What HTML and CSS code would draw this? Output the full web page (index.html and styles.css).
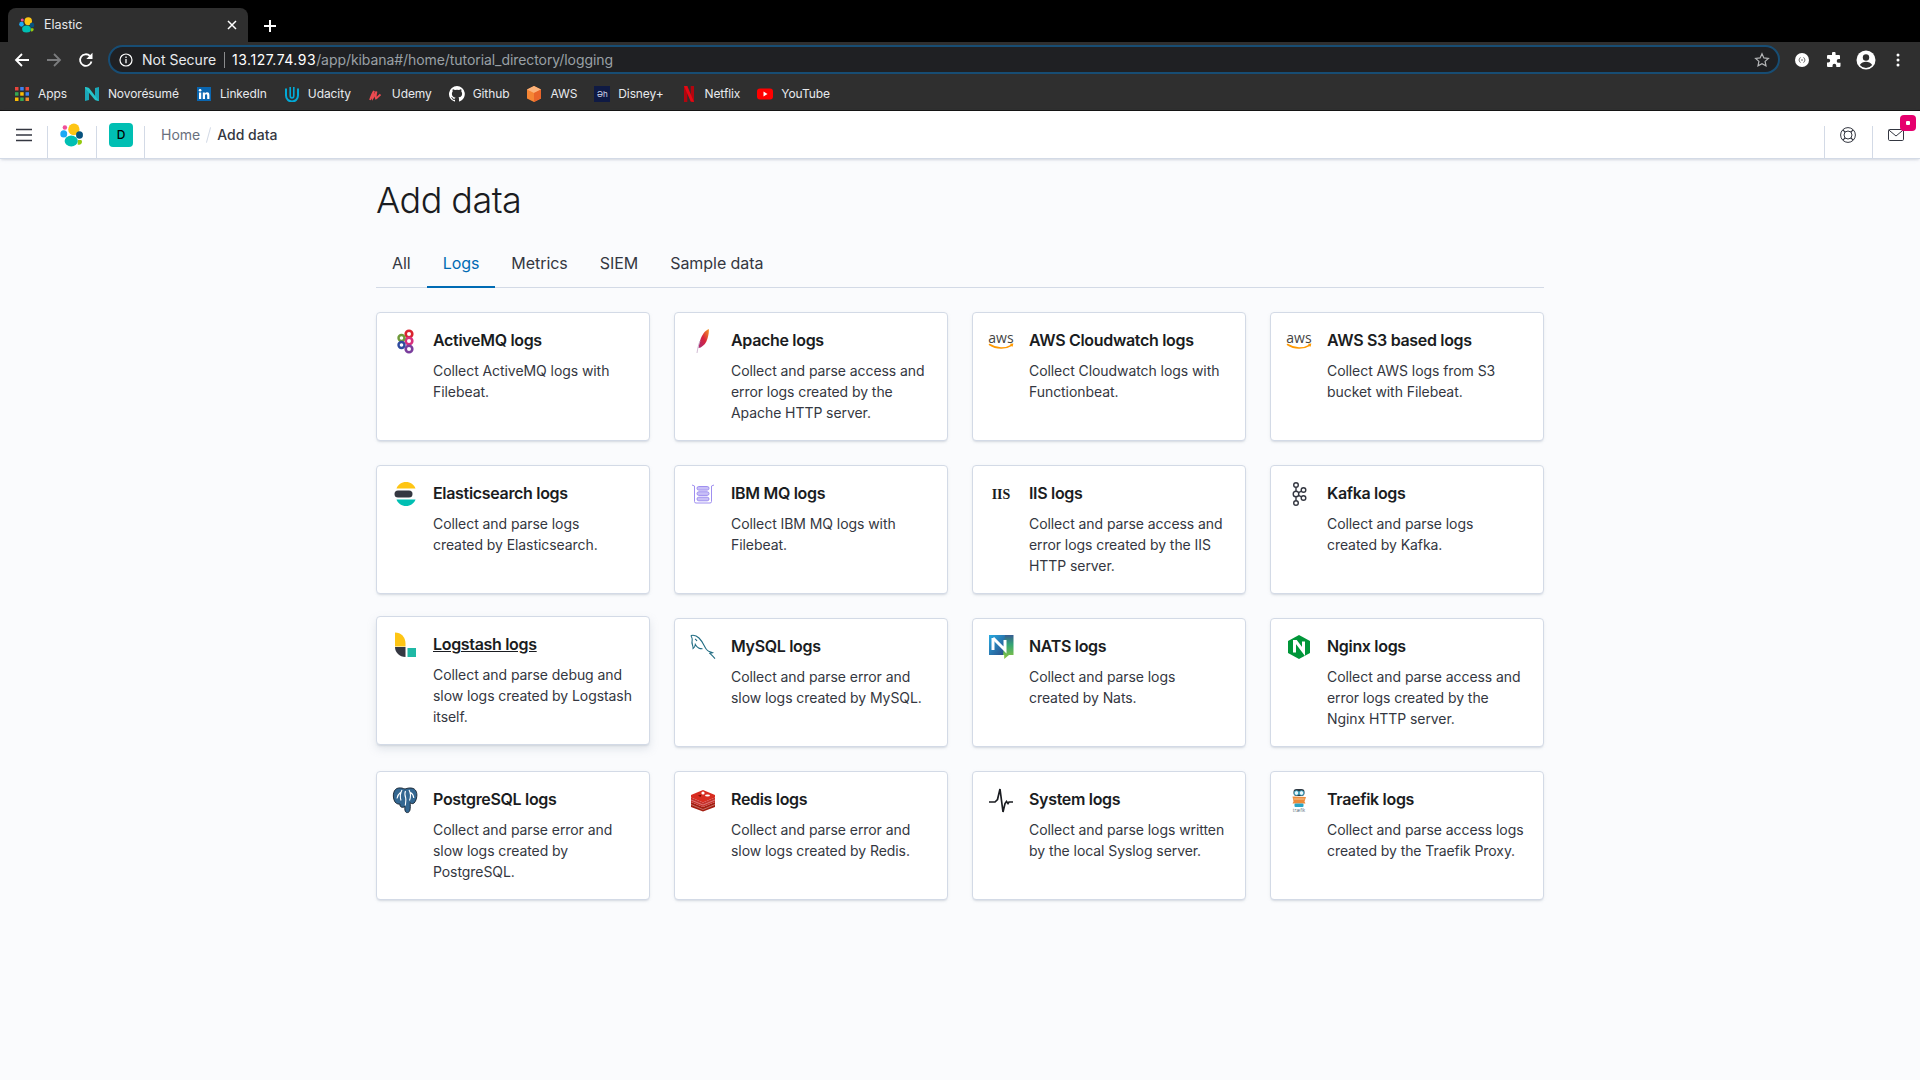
FILE: index.html
```html
<!DOCTYPE html>
<html lang="en">
<head>
<meta charset="utf-8">
<title>Elastic</title>
<link rel="stylesheet" href="styles.css">
</head>
<body>
<svg class="defs" width="0" height="0" aria-hidden="true">
  <defs>
    <symbol id="elastic" viewBox="0 0 32 32">
      <ellipse cx="18.5" cy="8.5" rx="7.5" ry="7.8" fill="#fec514"/>
      <circle cx="6.5" cy="6" r="3" fill="#f04e98"/>
      <ellipse cx="5" cy="14.5" rx="4.6" ry="4.8" fill="#1ba9f5"/>
      <ellipse cx="15" cy="24" rx="8.8" ry="7.2" fill="#00bfb3"/>
      <ellipse cx="26" cy="16" rx="4.6" ry="5" fill="#07527e"/>
      <path d="M24 22.500h4.500a4 4 0 0 1-5 6z" fill="#93c90e"/>
    </symbol>
    <symbol id="aws" viewBox="0 0 32 32">
      <text x="16" y="18" text-anchor="middle" class="aws-text">aws</text>
      <path d="M4.500 19.500c7 4.500 16 4.600 22.500.6" fill="none" stroke="#f90" stroke-width="1.500" stroke-linecap="round"/>
      <path d="M24.800 18.800l3.600-.3-1.100 3.500z" fill="#f90"/>
    </symbol>
    <linearGradient id="feather" x1="0" y1="1" x2="1" y2="0">
      <stop offset="0" stop-color="#a62a78"/>
      <stop offset=".5" stop-color="#d8253c"/>
      <stop offset="1" stop-color="#f69923"/>
    </linearGradient>
    <linearGradient id="natsblue" x1="0" y1="0" x2="1" y2="1">
      <stop offset="0" stop-color="#27aae1"/>
      <stop offset="1" stop-color="#2a4b85"/>
    </linearGradient>
    <linearGradient id="natsgreen" x1="0" y1="0" x2="0" y2="1">
      <stop offset="0" stop-color="#375c93"/>
      <stop offset=".4" stop-color="#34a574"/>
      <stop offset="1" stop-color="#8dc63f"/>
    </linearGradient>
  </defs>
</svg>

<div class="tabstrip">
  <div class="tab">
    <svg class="tab-logo" width="16" height="16"><use href="#elastic"/></svg>
    <span class="tab-title">Elastic</span>
    <svg class="tab-close" width="10" height="10" viewBox="0 0 10 10"><path d="M1 1l8 8M9 1l-8 8" stroke="#fff" stroke-width="1.500"/></svg>
  </div>
  <svg class="new-tab" width="14" height="14" viewBox="0 0 14 14"><path d="M7 1v12M1 7h12" stroke="#fff" stroke-width="2"/></svg>
</div>

<div class="toolbar">
  <div class="tool"><svg width="16" height="16" viewBox="0 0 16 16"><path d="M15 8H2M8 2L2 8l6 6" fill="none" stroke="#fff" stroke-width="1.800"/></svg></div>
  <div class="tool"><svg width="16" height="16" viewBox="0 0 16 16"><path d="M1 8h13M8 2l6 6-6 6" fill="none" stroke="#7b7c7e" stroke-width="1.800"/></svg></div>
  <div class="tool"><svg width="16" height="16" viewBox="0 0 16 16"><path d="M13.500 9.500A5.800 5.800 0 1 1 12 4" fill="none" stroke="#fff" stroke-width="1.800"/><path d="M14.500.800v6.200H8.300z" fill="#fff"/></svg></div>
  <div class="omnibox">
    <svg class="omni-info" width="14" height="14" viewBox="0 0 14 14"><circle cx="7" cy="7" r="6" fill="none" stroke="#fff" stroke-width="1.200"/><path d="M7 6v4.200M7 3.600v1.300" stroke="#fff" stroke-width="1.300"/></svg>
    <span class="not-secure">Not Secure</span>
    <span class="omni-sep"></span>
    <span class="url"><span class="url-host">13.127.74.93</span>/app/kibana#/home/tutorial_directory/logging</span>
    <svg class="omni-star" width="16" height="16" viewBox="0 0 16 16"><path d="M8 1.800l1.900 4.100 4.500.5-3.300 3 .9 4.400L8 11.600l-4 2.200.9-4.400-3.300-3 4.500-.5z" fill="none" stroke="#b4b5b7" stroke-width="1.200"/></svg>
  </div>
  <div class="tool tool-first"><svg width="16" height="16" viewBox="0 0 16 16"><circle cx="8" cy="8" r="7" fill="#fff"/><path d="M6.500 5.500c-1.200 0-.8 2.500-1.700 2.500.9 0 .5 2.500 1.700 2.500M9.500 5.500c1.200 0 .8 2.500 1.700 2.500-.9 0-.5 2.500-1.700 2.500M7 8h2" fill="none" stroke="#555" stroke-width=".9"/></svg></div>
  <div class="tool"><svg width="16" height="16" viewBox="0 0 16 16"><path d="M6 1.500a1.800 1.800 0 0 1 3.600 0V3H13a1 1 0 0 1 1 1v3h-1.400a1.900 1.900 0 0 0 0 3.800H14.500V14a1 1 0 0 1-1 1h-3.200v-1.300a1.900 1.900 0 0 0-3.800 0V15H2a1 1 0 0 1-1-1v-3.500h1.300a1.900 1.900 0 0 0 0-3.800H1V4a1 1 0 0 1 1-1h4z" fill="#fff"/></svg></div>
  <div class="tool"><svg width="20" height="20" viewBox="0 0 20 20"><circle cx="10" cy="10" r="9.500" fill="#fff"/><circle cx="10" cy="7.500" r="3.200" fill="#2f2f2f"/><path d="M3.800 15c1.500-2.400 3.700-3.200 6.200-3.200s4.700.8 6.200 3.200a8 8 0 0 1-12.400 0z" fill="#2f2f2f"/></svg></div>
  <div class="tool"><svg width="4" height="14" viewBox="0 0 4 14"><circle cx="2" cy="2" r="1.500" fill="#fff"/><circle cx="2" cy="7" r="1.500" fill="#fff"/><circle cx="2" cy="12" r="1.500" fill="#fff"/></svg></div>
</div>

<div class="bookmarks">
  <div class="bm bm-apps">
    <svg width="16" height="16" viewBox="0 0 16 16">
      <rect x="1" y="1" width="3.500" height="3.500" fill="#e8453c"/><rect x="6.200" y="1" width="3.500" height="3.500" fill="#3e82f1"/><rect x="11.500" y="1" width="3.500" height="3.500" fill="#e8453c"/>
      <rect x="1" y="6.200" width="3.500" height="3.500" fill="#34a853"/><rect x="6.200" y="6.200" width="3.500" height="3.500" fill="#fbbc05"/><rect x="11.500" y="6.200" width="3.500" height="3.500" fill="#3e82f1"/>
      <rect x="1" y="11.500" width="3.500" height="3.500" fill="#fbbc05"/><rect x="6.200" y="11.500" width="3.500" height="3.500" fill="#34a853"/><rect x="11.500" y="11.500" width="3.500" height="3.500" fill="#ef8b2c"/>
    </svg>
    <span>Apps</span>
  </div>
  <div class="bm bm-novo">
    <svg width="16" height="16" viewBox="0 0 16 16"><path d="M1 1l4 1v12l-4 1zM15 1l-4 1v12l4 1z" fill="#1ba8b8"/><path d="M1 1l4 1 10 13-4-1L1 2z" fill="#27c4c9"/></svg>
    <span>Novorésumé</span>
  </div>
  <div class="bm bm-li">
    <svg width="16" height="14" viewBox="0 0 14 14"><rect width="14" height="14" fill="#0a66b0"/><rect x="2" y="5.500" width="2.200" height="6.500" fill="#fff"/><circle cx="3.100" cy="3.300" r="1.300" fill="#fff"/><path d="M5.800 5.500h2.100v1c.5-.8 1.200-1.200 2.200-1.200 1.800 0 2.300 1.200 2.300 3V12h-2.200V8.800c0-.9-.2-1.600-1-1.600-.9 0-1.200.7-1.200 1.600V12H5.800z" fill="#fff"/></svg>
    <span>LinkedIn</span>
  </div>
  <div class="bm bm-uda">
    <svg width="16" height="16" viewBox="0 0 16 16"><path d="M2 2.500v7a6 6 0 0 0 12 0v-7" fill="none" stroke="#02a9d6" stroke-width="2"/><path d="M6.200 1v8.500c0 1.500 1 2.500 1.800 2.500s1.800-1 1.800-2.500V1" fill="none" stroke="#02a9d6" stroke-width="1.600"/></svg>
    <span>Udacity</span>
  </div>
  <div class="bm bm-ude">
    <svg width="16" height="16" viewBox="0 0 16 16"><path d="M2 14c1-3 2.500-7 4-9-1 3-2 5.500-1.500 7.500.7-1 2.500-4 4-7-.7 3-1.200 5.500-.5 7 1-.5 2.500-2.500 4.500-4" fill="none" stroke="#ec4a50" stroke-width="1.800"/></svg>
    <span>Udemy</span>
  </div>
  <div class="bm bm-git">
    <svg width="16" height="16" viewBox="0 0 16 16"><path d="M8 0a8 8 0 0 0-2.500 15.600c.4.100.5-.2.500-.4v-1.400c-2.200.5-2.700-1-2.700-1-.4-.9-.9-1.200-.9-1.200-.7-.5.100-.5.100-.5.800.1 1.200.8 1.200.8.700 1.200 1.900.9 2.300.7.100-.5.300-.9.500-1.100-1.800-.2-3.600-.9-3.600-4 0-.9.300-1.600.8-2.100-.1-.2-.4-1 .1-2.100 0 0 .7-.2 2.200.8a7.600 7.600 0 0 1 4 0c1.500-1 2.200-.8 2.200-.8.400 1.100.2 1.900.1 2.100.5.600.8 1.300.8 2.100 0 3.100-1.900 3.700-3.600 3.900.3.300.5.800.5 1.500v2.200c0 .2.100.5.600.4A8 8 0 0 0 8 0z" fill="#fff"/></svg>
    <span>Github</span>
  </div>
  <div class="bm bm-aws">
    <svg width="16" height="16" viewBox="0 0 16 16"><path d="M8 0l7 3.500v9L8 16l-7-3.500v-9z" fill="#f58534"/><path d="M8 0l7 3.500L8 7 1 3.500z" fill="#fbb27a"/><path d="M8 7l7-3.500v9L8 16z" fill="#e9642a"/></svg>
    <span>AWS</span>
  </div>
  <div class="bm bm-dis">
    <span class="dis-icon">Əh</span>
    <span>Disney+</span>
  </div>
  <div class="bm bm-net">
    <svg width="16" height="16" viewBox="0 0 12 16"><path d="M1 0h3.300v16L1 16z" fill="#b1060f"/><path d="M7.700 0H11v16l-3.300-.5z" fill="#b1060f"/><path d="M1 0h3.300L11 16l-3.300-.5z" fill="#e50914"/></svg>
    <span>Netflix</span>
  </div>
  <div class="bm bm-yt">
    <svg width="16" height="12" viewBox="0 0 16 12"><rect width="16" height="11" y=".5" rx="3" fill="#f00"/><path d="M6.500 3.500l4 2.500-4 2.500z" fill="#fff"/></svg>
    <span>YouTube</span>
  </div>
</div>

<header class="kbn-header">
  <div class="hd-btn hd-menu"><svg width="16" height="14" viewBox="0 0 16 14"><path d="M0 1.500h16M0 7h16M0 12.500h16" stroke="#343741" stroke-width="1.600"/></svg></div>
  <div class="hd-btn hd-logo"><svg width="24" height="24"><use href="#elastic"/></svg></div>
  <div class="hd-btn hd-space"><span class="avatar">D</span></div>
  <nav class="crumbs">
    <span class="crumb-link">Home</span>
    <span class="crumb-sep"></span>
    <span class="crumb-current">Add data</span>
  </nav>
  <div class="hd-btn hd-right"><svg width="16" height="16" viewBox="0 0 16 16"><circle cx="8" cy="8" r="7.400" fill="none" stroke="#343741"/><circle cx="8" cy="8" r="4" fill="none" stroke="#343741"/><path d="M2.800 2.800l2.400 2.400M13.200 2.800l-2.400 2.400M2.800 13.200l2.400-2.400M13.200 13.200l-2.400-2.400" stroke="#343741" stroke-width="1.200"/></svg></div>
  <div class="hd-btn hd-right hd-mail">
    <svg width="16" height="12" viewBox="0 0 16 12"><rect x=".5" y=".5" width="15" height="11" rx="1.200" fill="none" stroke="#343741"/><path d="M.8 1l7.200 6 7.200-6" fill="none" stroke="#343741"/></svg>
    <span class="badge"><span class="badge-dot"></span></span>
  </div>
</header>

<main class="page">
  <h1 class="page-title">Add data</h1>
  <div class="tabs">
    <span class="kbn-tab">All</span>
    <span class="kbn-tab is-selected">Logs</span>
    <span class="kbn-tab">Metrics</span>
    <span class="kbn-tab">SIEM</span>
    <span class="kbn-tab">Sample data</span>
  </div>

  <div class="grid">
    <article class="card">
      <svg class="card-icon" viewBox="0 0 32 32">
        <circle cx="20" cy="9" r="3.300" fill="none" stroke="#d9232e" stroke-width="2.600"/>
        <circle cx="20" cy="16" r="3.300" fill="none" stroke="#d8307c" stroke-width="2.600"/>
        <circle cx="20" cy="24" r="3.300" fill="none" stroke="#7a3e9d" stroke-width="2.600"/>
        <circle cx="12.500" cy="13" r="3" fill="none" stroke="#6f9a3a" stroke-width="2.400"/>
        <circle cx="12.500" cy="20" r="3" fill="none" stroke="#2e4a9e" stroke-width="2.400"/>
      </svg>
      <div class="card-body"><h2 class="card-title">ActiveMQ logs</h2><p class="card-desc">Collect ActiveMQ logs with Filebeat.</p></div>
    </article>

    <article class="card">
      <svg class="card-icon" viewBox="0 0 32 32">
        <path d="M21.800 4c-3.800 1.500-7 6-8.800 12-.7 2.400-1.300 5-1.500 7l2.200-.6c3.300-1.500 5.600-4.700 6.800-8.800 1-3.400 1.700-7 1.300-9.600z" fill="url(#feather)"/>
        <path d="M10 28c.6-4 1.500-8.500 3-12" fill="none" stroke="#c6a9c8" stroke-width=".8"/>
      </svg>
      <div class="card-body"><h2 class="card-title">Apache logs</h2><p class="card-desc">Collect and parse access and error logs created by the Apache HTTP server.</p></div>
    </article>

    <article class="card">
      <svg class="card-icon"><use href="#aws"/></svg>
      <div class="card-body"><h2 class="card-title">AWS Cloudwatch logs</h2><p class="card-desc">Collect Cloudwatch logs with Functionbeat.</p></div>
    </article>

    <article class="card">
      <svg class="card-icon"><use href="#aws"/></svg>
      <div class="card-body"><h2 class="card-title">AWS S3 based logs</h2><p class="card-desc">Collect AWS logs from S3 bucket with Filebeat.</p></div>
    </article>

    <article class="card">
      <svg class="card-icon" viewBox="0 0 32 32">
        <path d="M7.500 10.500C9 6.500 12.500 4 17 4s8 2.500 9.500 6.500z" fill="#fec514"/>
        <rect x="5.500" y="12.500" width="18" height="7" rx="3.500" fill="#343741"/>
        <path d="M7.500 21.500h19C25 25.500 21.500 28 17 28s-8-2.500-9.500-6.500z" fill="#00bfb3"/>
      </svg>
      <div class="card-body"><h2 class="card-title">Elasticsearch logs</h2><p class="card-desc">Collect and parse logs<br>created by Elasticsearch.</p></div>
    </article>

    <article class="card">
      <svg class="card-icon" viewBox="0 0 32 32" fill="none" stroke="#9f8ff0" stroke-width="1">
        <path d="M5 7l2.500 1v15.500a1.500 1.500 0 0 0 1.500 1.500h14a1.500 1.500 0 0 0 1.500-1.500V8L27 7"/>
        <rect x="10" y="8.500" width="12" height="3.600" rx="1.800" fill="#c9c0f7"/>
        <rect x="10" y="13.800" width="12" height="3.600" rx="1.800" fill="#c9c0f7"/>
        <rect x="10" y="19.200" width="12" height="3.600" rx="1.800" fill="#c9c0f7"/>
      </svg>
      <div class="card-body"><h2 class="card-title">IBM MQ logs</h2><p class="card-desc">Collect IBM MQ logs with Filebeat.</p></div>
    </article>

    <article class="card">
      <svg class="card-icon" viewBox="0 0 32 32"><text x="16" y="21" text-anchor="middle" class="iis-text">IIS</text></svg>
      <div class="card-body"><h2 class="card-title">IIS logs</h2><p class="card-desc">Collect and parse access and error logs created by the IIS HTTP server.</p></div>
    </article>

    <article class="card">
      <svg class="card-icon" viewBox="0 0 32 32" fill="none" stroke="#343741" stroke-width="1.400">
        <circle cx="13" cy="7" r="2.300"/><circle cx="13" cy="16" r="2.800"/><circle cx="13" cy="25" r="2.300"/>
        <circle cx="20.500" cy="12" r="2.300"/><circle cx="20.500" cy="20" r="2.300"/>
        <path d="M13 9.300v3.900M13 18.800v3.900M15.500 14.700l3-1.500M15.500 17.300l3 1.500"/>
      </svg>
      <div class="card-body"><h2 class="card-title">Kafka logs</h2><p class="card-desc">Collect and parse logs<br>created by Kafka.</p></div>
    </article>

    <article class="card is-hover">
      <svg class="card-icon" viewBox="0 0 32 32">
        <path d="M6 3.500c6 0 10.500 4.500 10.500 11v3H6z" fill="#fec514"/>
        <path d="M6 18h10.500v10C10.500 28 6 23.500 6 18z" fill="#343741"/>
        <rect x="18.500" y="19" width="8.500" height="9" fill="#1fb8a5"/>
      </svg>
      <div class="card-body"><h2 class="card-title">Logstash logs</h2><p class="card-desc">Collect and parse debug and slow logs created by Logstash itself.</p></div>
    </article>

    <article class="card">
      <svg class="card-icon" viewBox="0 0 32 32" fill="none" stroke="#1f6b82" stroke-width="1.100">
        <path d="M4 4.500c3-.8 6 .5 8 2.500 4 4 5 8 7.500 11.500 1.500 2 4 2.500 6 3.200-1 .4-2 .3-2.700.6.800.8 2.500 2.200 5.200 5.400"/>
        <path d="M4 4.500c.3 1.500 1.500 2.700 1.200 4.300-.3 1.200-.5 3 .3 5.300.5 1.400.8 2.400.6 3.400 1.500-.6 2-2.500 2.200-4 .8 1.400 1.700 2.500 3.400 3.500"/>
        <path d="M8 8c1 .5 1.500 1.300 2 2M11.500 17c1 .5 2.700.8 4 .8"/>
      </svg>
      <div class="card-body"><h2 class="card-title">MySQL logs</h2><p class="card-desc">Collect and parse error and slow logs created by MySQL.</p></div>
    </article>

    <article class="card">
      <svg class="card-icon" viewBox="0 0 32 32">
        <rect x="4" y="4" width="16" height="20" fill="url(#natsblue)"/>
        <path d="M20 4h8.500v20H24l-4.800 4v-4H18z" fill="url(#natsgreen)"/>
        <path d="M8 7l12 12V9" fill="none" stroke="#fff" stroke-width="3"/>
        <path d="M8 7v12" stroke="#fff" stroke-width="3"/>
      </svg>
      <div class="card-body"><h2 class="card-title">NATS logs</h2><p class="card-desc">Collect and parse logs<br>created by Nats.</p></div>
    </article>

    <article class="card">
      <svg class="card-icon" viewBox="0 0 32 32">
        <path d="M16 4l11 6v12l-11 6-11-6V10z" fill="#009639"/>
        <path d="M11.500 21.500v-11h1.500l7.500 10v-10" fill="none" stroke="#fff" stroke-width="3"/>
      </svg>
      <div class="card-body"><h2 class="card-title">Nginx logs</h2><p class="card-desc">Collect and parse access and error logs created by the Nginx HTTP server.</p></div>
    </article>

    <article class="card">
      <svg class="card-icon" viewBox="0 0 32 32">
        <path d="M9.500 4C12 3.600 14 4.300 16 5c2.500-.9 5.500-1.500 8-.6 3.500 1.300 4.500 5.500 3.500 9.600-.6 2.700-1.800 5.300-3.600 5.600-1.200.2-2-.3-2.600-1-.1 2.700.2 5.800-.4 7.700-.5 1.700-2 2.800-3.600 2.100-1.500-.7-1.600-3.400-1.500-6-1 1-2.400 1.100-3.600.6-1.200-.6-1.400-1.800-1.200-2.900-2.600.4-5-1-6-4.300C3.500 11 4.500 4.800 9.500 4z" fill="#336791" stroke="#14202e" stroke-width=".9"/>
        <path d="M13 6c-1.800 3-2 7-1 10.500M20 6c1.800 3 1.800 7 .5 10.500M16.500 7c-1 2-.8 4 .2 7 .5 2-.2 5-.4 7.500M21.500 8.500c1.800 1 3 3 3.300 5.500M11.500 8.500C9.500 10 8.300 12 8 14.500" fill="none" stroke="#fff" stroke-width="1.100"/>
      </svg>
      <div class="card-body"><h2 class="card-title">PostgreSQL logs</h2><p class="card-desc">Collect and parse error and slow logs created by PostgreSQL.</p></div>
    </article>

    <article class="card">
      <svg class="card-icon" viewBox="0 0 32 32">
        <path d="M4 18l12 5 12-5v5l-12 4.500L4 23z" fill="#a41e11"/>
        <path d="M4 13.500l12 5 12-5v4.500l-12 5-12-5z" fill="#c6302b"/>
        <path d="M4 11l12-5 12 5v2.500l-12 5-12-5z" fill="#d82c20"/>
        <path d="M4 16l12 5 12-5M4 20.500l12 5 12-5" fill="none" stroke="#fff" stroke-width=".5" opacity=".7"/>
        <circle cx="16" cy="9" r="1.600" fill="#fff"/>
        <path d="M11 11.500l3.500-.8-1 2.300z" fill="#7a0c00"/><ellipse cx="20.500" cy="11.500" rx="2.500" ry="1.100" fill="#fff"/>
      </svg>
      <div class="card-body"><h2 class="card-title">Redis logs</h2><p class="card-desc">Collect and parse error and slow logs created by Redis.</p></div>
    </article>

    <article class="card">
      <svg class="card-icon" viewBox="0 0 32 32"><path d="M4 18h6l2.500-2.500 2.500-10.500 3 23 2-8.500 1.500-2 1.500 2 1-1.500H28" fill="none" stroke="#1a1c21" stroke-width="1.700"/></svg>
      <div class="card-body"><h2 class="card-title">System logs</h2><p class="card-desc">Collect and parse logs written by the local Syslog server.</p></div>
    </article>

    <article class="card">
      <svg class="card-icon" viewBox="0 0 32 32">
        <rect x="10.500" y="5" width="11" height="7" rx="3" fill="#2f3a44"/>
        <circle cx="13.500" cy="9" r="2.300" fill="#e8f6fb" stroke="#29a5c6" stroke-width=".8"/>
        <circle cx="18.500" cy="9" r="2.300" fill="#e8f6fb" stroke="#29a5c6" stroke-width=".8"/>
        <path d="M9.500 12.500L23 13l-1.500 4.500 1 2h-13l1-2z" fill="#ec8a3a"/>
        <path d="M10.500 15h11" stroke="#f6c48e" stroke-width="1"/>
        <rect x="11.500" y="19.500" width="9" height="3.500" rx="1" fill="#29a5c6"/>
        <text x="16" y="28" text-anchor="middle" class="traefik-text">træfik</text>
      </svg>
      <div class="card-body"><h2 class="card-title">Traefik logs</h2><p class="card-desc">Collect and parse access logs created by the Traefik Proxy.</p></div>
    </article>
  </div>
</main>
</body>
</html>
```

FILE: styles.css
```css
* { box-sizing: border-box; }

html, body { margin: 0; height: 100%; }

body {
  display: flex;
  flex-direction: column;
  overflow: hidden;
  background: #fafbfd;
  color: #343741;
  font-family: Inter, "Noto Sans", sans-serif;
}

.defs { position: absolute; }

/* Browser chrome */
.tabstrip {
  flex: none;
  height: 42px;
  background: #000;
  display: flex;
  align-items: flex-end;
  padding-left: 8px;
}

.tab {
  width: 240px;
  height: 34px;
  background: #2f2f2f;
  border-radius: 8px 8px 0 0;
  display: flex;
  align-items: center;
  padding: 0 11px 1px;
  color: #e8eaed;
  font-size: 12.5px;
}

.tab-title { margin-left: 9px; flex: 1; }

.new-tab { margin: 0 0 9px 15px; }

.toolbar {
  flex: none;
  height: 36px;
  background: #2f2f2f;
  display: flex;
  align-items: center;
  padding: 0 6px 1px;
}

.tool {
  width: 32px;
  height: 28px;
  display: flex;
  align-items: center;
  justify-content: center;
}

.tool-first { margin-left: 6px; }

.omnibox {
  flex: 1;
  margin-left: 6px;
  height: 29px;
  border: 2px solid #174d74;
  border-radius: 15px;
  background: #1f2023;
  display: flex;
  align-items: center;
  padding: 0 8px 0 9px;
  font-size: 14px;
}

.not-secure { margin-left: 9px; color: #e8eaed; }

.omni-sep { width: 1px; height: 16px; background: #8a8b8d; margin: 0 7px 0 8px; }

.url { flex: 1; color: #9aa0a6; letter-spacing: -.07px; }

.url-host { color: #fff; letter-spacing: .5px; }

.bookmarks {
  flex: none;
  height: 33px;
  background: #2f2f2f;
  border-bottom: 1px solid #111;
  display: flex;
  align-items: center;
  padding: 0 0 1px 14px;
  color: #e8eaed;
  font-size: 12px;
  letter-spacing: -.1px;
}

.bm { display: flex; align-items: center; gap: 8px; margin-right: 17px; }

.bm svg { flex: none; }

.dis-icon {
  width: 16px;
  height: 16px;
  background: #0f1a44;
  color: #cfd6ea;
  font-size: 8px;
  line-height: 16px;
  text-align: center;
}

/* Kibana header */
.kbn-header {
  flex: none;
  height: 48px;
  background: #fff;
  display: flex;
  box-shadow: 0 2px 2px -1px rgba(152, 162, 179, .3), 0 1px 5px -2px rgba(152, 162, 179, .3);
  border-bottom: 1px solid #d3dae6;
  position: relative;
}

.hd-btn {
  width: 48px;
  display: flex;
  align-items: center;
  justify-content: center;
  position: relative;
}

.hd-logo { width: 49px; padding-right: 2px; }

.hd-menu::after,
.hd-logo::after,
.hd-space::after,
.hd-right::before {
  content: "";
  position: absolute;
  right: 0;
  bottom: 0;
  width: 1px;
  height: 32px;
  background: #d3dae6;
}

.hd-right::before { left: 0; right: auto; }

.avatar {
  width: 24px;
  height: 24px;
  border-radius: 4px;
  background: #00bfb3;
  color: #000;
  font-size: 12px;
  font-weight: 500;
  line-height: 24px;
  text-align: center;
}

.crumbs {
  flex: 1;
  display: flex;
  align-items: center;
  padding-left: 16px;
  font-size: 14px;
}

.crumb-link { color: #69707d; }

.crumb-sep {
  width: 1px;
  height: 16px;
  background: #d3dae6;
  transform: rotate(15deg);
  margin: 0 8px;
}

.crumb-current { color: #343741; font-weight: 500; }

.badge {
  position: absolute;
  top: 4px;
  left: 28px;
  width: 16px;
  height: 16px;
  border-radius: 4px;
  background: #e6006e;
  display: flex;
  align-items: center;
  justify-content: center;
}

.badge-dot { width: 4px; height: 4px; background: #fff; border-radius: 1px; }

/* Page */
.page { width: 1168px; margin: 0 auto; padding-top: 17px; }

.page-title {
  margin: 0 0 16px;
  font-size: 36px;
  font-weight: 300;
  line-height: 48px;
  letter-spacing: -.55px;
  color: #1a1c21;
}

.tabs { display: flex; border-bottom: 1px solid #d3dae6; height: 48px; }

.kbn-tab {
  padding: 0 16px;
  font-size: 16px;
  line-height: 47px;
  height: 48px;
  letter-spacing: -.05px;
  color: #343741;
}

.kbn-tab.is-selected { color: #006bb4; border-bottom: 2px solid #006bb4; }

.grid {
  display: grid;
  grid-template-columns: repeat(4, 1fr);
  grid-auto-rows: 129px;
  gap: 24px;
  margin-top: 24px;
}

.card {
  display: flex;
  gap: 12px;
  background: #fff;
  border: 1px solid #d3dae6;
  border-radius: 4px;
  padding: 15px 15px 16px 12px;
  box-shadow: 0 2px 2px -1px rgba(152, 162, 179, .3), 0 1px 5px -2px rgba(152, 162, 179, .3);
}

.card.is-hover {
  transform: translateY(-2px);
  box-shadow: 0 4px 8px 0 rgba(152, 162, 179, .25), 0 2px 2px -1px rgba(152, 162, 179, .3);
}

.card-icon { flex: none; width: 32px; height: 32px; margin-top: -3px; }

.card-body { flex: 1; min-width: 0; }

.card-title {
  margin: 0 0 8px;
  font-size: 16px;
  font-weight: 600;
  line-height: 24px;
  letter-spacing: -.32px;
  color: #1a1c21;
}

.is-hover .card-title { text-decoration: underline; }

.card-desc {
  margin: 0;
  font-size: 14px;
  line-height: 21px;
  letter-spacing: -.07px;
  color: #343741;
}

.aws-text { font-family: "Open Sans", sans-serif; font-size: 14px; fill: #444; }

.iis-text { font-family: "Liberation Serif", serif; font-size: 14px; font-weight: 700; fill: #1a1c21; }

.traefik-text { font-family: "Open Sans", sans-serif; font-size: 4.500px; fill: #5d7380; }
```
